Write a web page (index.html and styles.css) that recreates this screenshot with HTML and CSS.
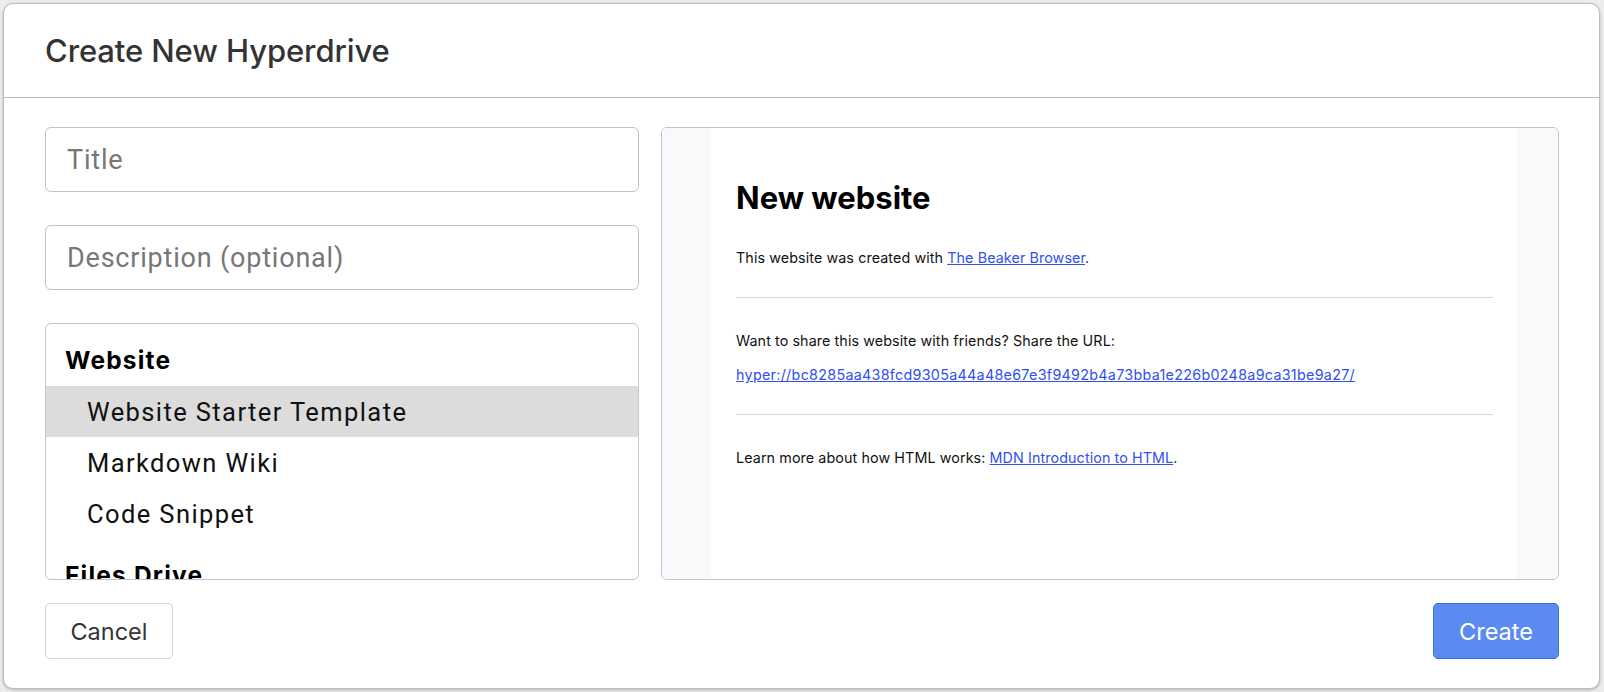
FILE: index.html
```html
<!DOCTYPE html>
<html>
<head>
<meta charset="utf-8">
<link rel="stylesheet" href="styles.css">
</head>
<body>
<div class="dialog">
  <div class="header">Create New Hyperdrive</div>
  <div class="main">
    <div class="left">
      <div class="input">Title</div>
      <div class="input">Description (optional)</div>
      <div class="list">
        <div class="group">Website</div>
        <div class="item selected">Website Starter Template</div>
        <div class="item">Markdown Wiki</div>
        <div class="item">Code Snippet</div>
        <div class="group">Files Drive</div>
        <div class="item">Empty Drive</div>
      </div>
    </div>
    <div class="preview">
      <div class="strip"></div>
      <div class="page">
        <h1 class="ph1">New website</h1>
        <p class="pp">This website was created with <a class="plink">The Beaker Browser</a>.</p>
        <div class="phr"></div>
        <p class="pp">Want to share this website with friends? Share the URL:</p>
        <p class="pp"><a class="plink url">hyper://bc8285aa438fcd9305a44a48e67e3f9492b4a73bba1e226b0248a9ca31be9a27/</a></p>
        <div class="phr"></div>
        <p class="pp">Learn more about how HTML works: <a class="plink">MDN Introduction to HTML</a>.</p>
      </div>
      <div class="strip"></div>
    </div>
  </div>
  <div class="footer">
    <div class="btn cancel">Cancel</div>
    <div class="btn create">Create</div>
  </div>
</div>
</body>
</html>
```
FILE: styles.css
```css
html, body {
  margin: 0;
  padding: 0;
  background: #ececec;
  height: 692px;
  overflow: hidden;
}
body {
  padding: 3px 4px 3px 3px;
  box-sizing: border-box;
  font-family: Inter, "Liberation Sans", sans-serif;
}
.dialog {
  height: 686px;
  box-sizing: border-box;
  background: #fff;
  border: 1px solid #bdbdbd;
  border-radius: 10px;
  box-shadow: 0 1px 3px rgba(0,0,0,0.25);
  display: flex;
  flex-direction: column;
}
.header {
  height: 93px;
  border-bottom: 1px solid #bcbcbc;
  padding-left: 41px;
  display: flex;
  align-items: center;
  font-size: 31px;
  font-weight: 500;
  color: #333;
  letter-spacing: -0.1px;
}
.main {
  display: flex;
  gap: 22px;
  padding: 29px 40px 0 41px;
  height: 453px;
}
.left {
  width: 594px;
  display: flex;
  flex-direction: column;
  gap: 33px;
}
.input {
  height: 65px;
  box-sizing: border-box;
  border: 1px solid #c2c2c2;
  border-radius: 6px;
  padding-left: 21px;
  display: flex;
  align-items: center;
  font-family: Roboto, sans-serif;
  font-size: 27px;
  letter-spacing: 0.8px;
  color: #777;
}
.list {
  height: 257px;
  box-sizing: border-box;
  border: 1px solid #c3c1d2;
  border-radius: 6px;
  overflow: hidden;
  font-family: Roboto, sans-serif;
}
.group {
  padding: 20px 19px 10px;
  line-height: 32px;
  font-size: 24.5px;
  font-weight: 700;
  letter-spacing: 1.2px;
  color: #000;
  font-family: Inter, sans-serif;
}
.item {
  height: 51px;
  padding-left: 41px;
  display: flex;
  align-items: center;
  font-size: 25.5px;
  color: #111;
  letter-spacing: 1.4px;
}
.item.selected { background: #dcdcdc; }
.preview {
  flex: 1;
  box-sizing: border-box;
  border: 1px solid #c3c1d2;
  border-radius: 6px;
  overflow: hidden;
  display: grid;
  grid-template-columns: 49px 1fr 41px;
}
.strip { background: #f9f9fb; }
.page {
  background: #fff;
  padding: 36px 24px 0 25px;
}
.ph1 {
  margin: 16px 0 33px;
  font-size: 31px;
  font-weight: 700;
  color: #000;
  line-height: 36px;
}
.pp {
  margin: 0 0 17px;
  font-size: 14.3px;
  line-height: 17px;
  color: #111;
  letter-spacing: 0.1px;
}
.plink {
  color: #2f4ff0;
  text-decoration: underline;
}
.plink.url { letter-spacing: 0.3px; }
.phr {
  height: 1px;
  background: #d6d4e6;
  margin: 31px 0 34px;
}
.footer {
  display: flex;
  justify-content: space-between;
  padding: 23px 40px 0 41px;
}
.btn {
  height: 56px;
  box-sizing: border-box;
  border-radius: 5px;
  display: flex;
  align-items: center;
  justify-content: center;
  font-size: 23.5px;
}
.cancel {
  width: 128px;
  border: 1px solid #d2d2da;
  color: #333;
  background: #fff;
}
.create {
  width: 126px;
  background: #5b8bf0;
  border: 1px solid #3b6ed8;
  color: #fff;
}
```
